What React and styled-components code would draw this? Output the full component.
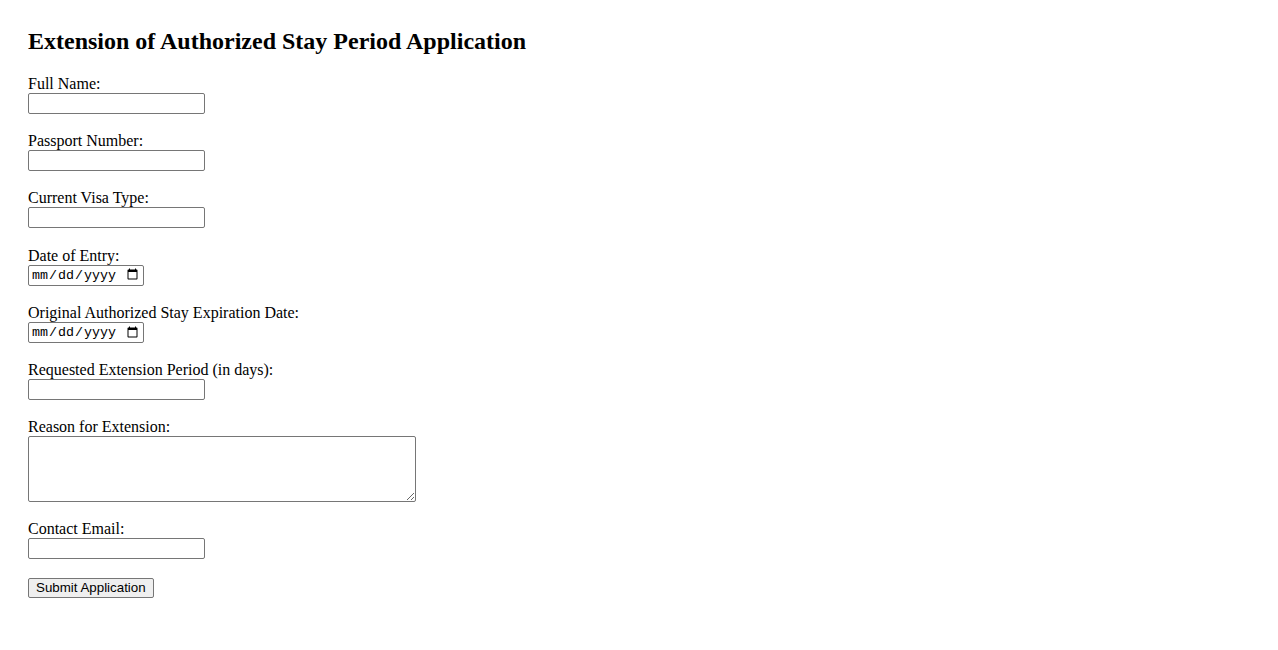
import React from 'react';
import styled, { createGlobalStyle } from 'styled-components';

const GlobalStyle = createGlobalStyle`
  body {
    margin: 8px;
    background: #ffffff;
    color: #000000;
    font-family: "Liberation Serif", "Times New Roman", serif;
    font-size: 16px;
  }
`;

const Page = styled.div`
  padding: 20px;
`;

const Title = styled.h2`
  margin: 0 0 20px;
  font-size: 24px;
  font-weight: bold;
`;

const Field = styled.div`
  margin-bottom: 18.2px;
`;

const Label = styled.label`
  display: block;
`;

const TextInput = styled.input`
  box-sizing: border-box;
  width: ${p => (p.type === 'date' ? '116px' : '177px')};
  height: 21px;
  padding: 1px 2px;
  border: 1px solid #767676;
  border-radius: 2px;
  font-family: ${p => (p.type === 'date' ? '"Liberation Mono", monospace' : '"Liberation Sans", Arial, sans-serif')};
  font-size: 13.33px;
  background: #fff;
`;

const TextArea = styled.textarea`
  box-sizing: border-box;
  display: block;
  width: 388px;
  height: 66px;
  margin-bottom: 3px;
  padding: 2px;
  border: 1px solid #767676;
  border-radius: 2px;
  font-family: "Liberation Mono", monospace;
  font-size: 13.33px;
`;

const Button = styled.button`
  box-sizing: border-box;
  height: 20px;
  padding: 1px 7px;
  border: 1px solid #767676;
  border-radius: 2px;
  background: #efefef;
  font-family: "Liberation Sans", Arial, sans-serif;
  font-size: 13.33px;
  color: #000;
`;

const fields = [
  { id: 'fullName', label: 'Full Name:', type: 'text' },
  { id: 'passport', label: 'Passport Number:', type: 'text' },
  { id: 'visaType', label: 'Current Visa Type:', type: 'text' },
  { id: 'entryDate', label: 'Date of Entry:', type: 'date' },
  { id: 'expiryDate', label: 'Original Authorized Stay Expiration Date:', type: 'date' },
  { id: 'days', label: 'Requested Extension Period (in days):', type: 'text' },
];

export default function App() {
  return (
    <>
      <GlobalStyle />
      <Page>
        <Title>Extension of Authorized Stay Period Application</Title>
        <form onSubmit={e => e.preventDefault()}>
          {fields.map(f => (
            <Field key={f.id}>
              <Label htmlFor={f.id}>{f.label}</Label>
              <TextInput id={f.id} type={f.type} />
            </Field>
          ))}
          <Field>
            <Label htmlFor="reason">Reason for Extension:</Label>
            <TextArea id="reason" rows={4} />
          </Field>
          <Field>
            <Label htmlFor="email">Contact Email:</Label>
            <TextInput id="email" type="email" />
          </Field>
          <Button type="submit">Submit Application</Button>
        </form>
      </Page>
    </>
  );
}
